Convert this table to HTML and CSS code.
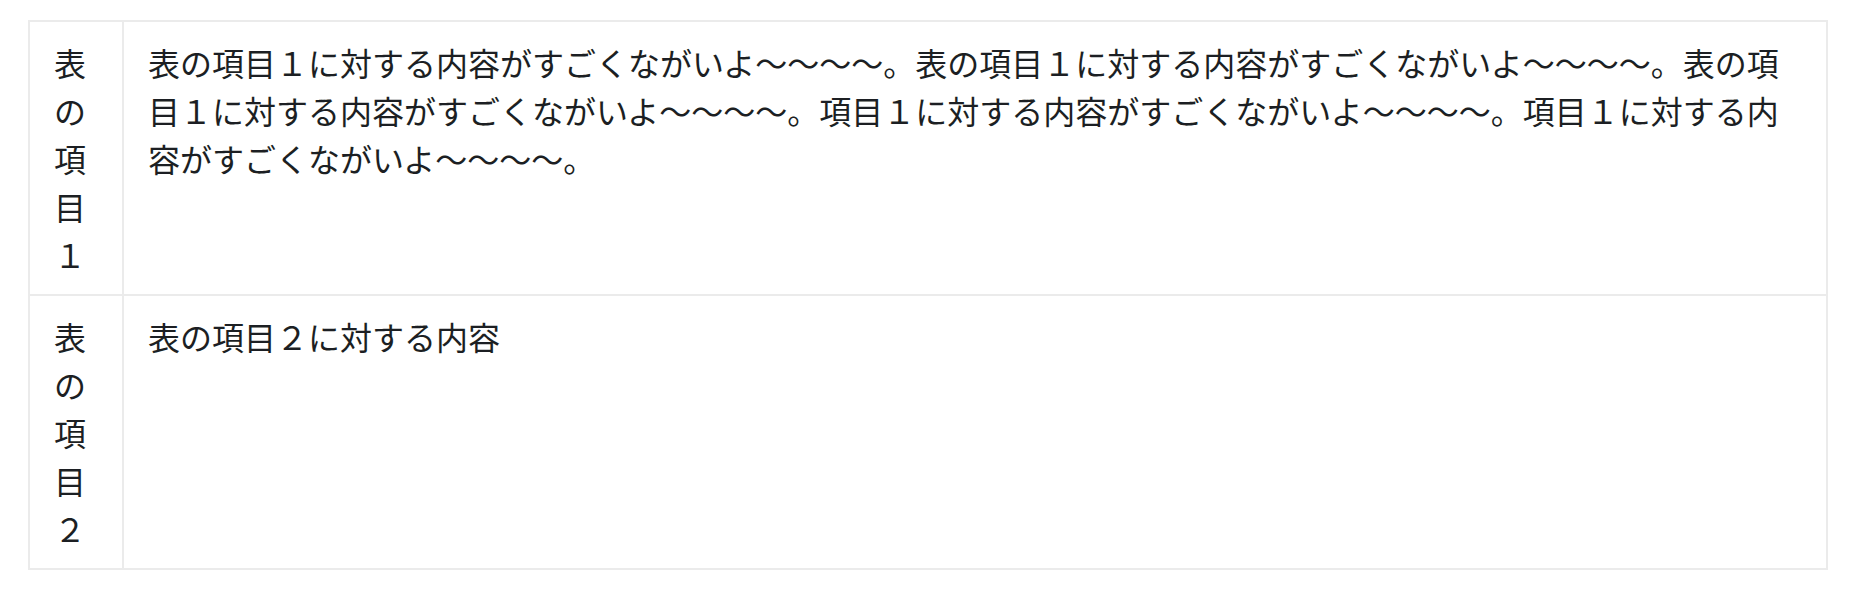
FILE: index.html
```html
<!DOCTYPE html>
<html lang="ja">
<head>
<meta charset="utf-8">
<link rel="stylesheet" href="styles.css">
</head>
<body>
<div class="page">
<table class="spec">
<tbody>
<tr>
<th class="head">表の項目１</th>
<td class="body">表の項目１に対する内容がすごくながいよ〜〜〜〜。表の項目１に対する内容がすごくながいよ〜〜〜〜。表の項目１に対する内容がすごくながいよ〜〜〜〜。項目１に対する内容がすごくながいよ〜〜〜〜。項目１に対する内容がすごくながいよ〜〜〜〜。</td>
</tr>
<tr>
<th class="head">表の項目２</th>
<td class="body">表の項目２に対する内容</td>
</tr>
</tbody>
</table>
</div>
</body>
</html>
```
FILE: styles.css
```css
html, body {
  margin: 0;
  padding: 0;
  background: #ffffff;
}
.page {
  padding: 20px 28px;
  font-family: "Noto Sans CJK JP", "Noto Sans", sans-serif;
  font-size: 32px;
  line-height: 48px;
  color: #1c1f23;
}
.spec {
  width: 1800px;
  border-collapse: collapse;
  table-layout: fixed;
}
.head, .body {
  border: 2px solid #ebebeb;
  padding: 16px 24px;
  vertical-align: top;
  text-align: left;
  font-weight: 400;
}
.head {
  width: 44px;
}
.body {
  height: 240px;
}
```
